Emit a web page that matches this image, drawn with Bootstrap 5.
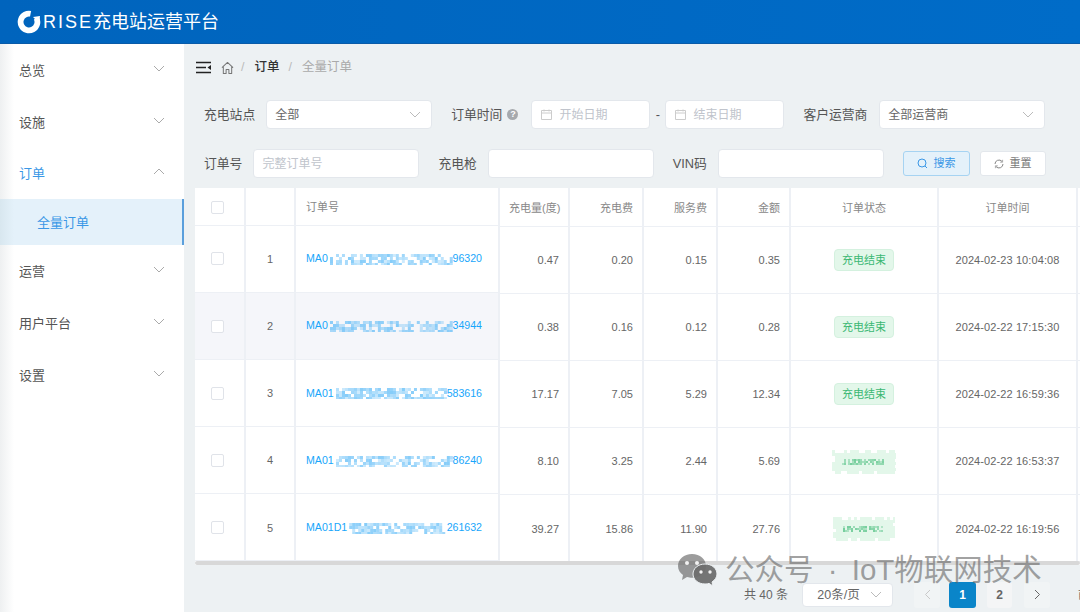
<!DOCTYPE html>
<html lang="zh">
<head>
<meta charset="utf-8">
<title>RISE充电站运营平台</title>
<link href="https://cdn.jsdelivr.net/npm/bootstrap@5.3.0/dist/css/bootstrap.min.css" rel="stylesheet">
<style>
html,body{height:100%;overflow:hidden}
body{width:1080px;height:612px;background:#edf1f3;font-family:"Liberation Sans","Noto Sans CJK SC",sans-serif;font-size:12px;color:#555}
.topbar{height:44px;background:linear-gradient(90deg,#0064bd,#006cc8);color:#fff;padding-left:17px;border-bottom:1px solid #0a5ba8}
.brand-txt{font-size:18px;margin-left:2px;line-height:44px}
.brand-txt i{font-style:normal;letter-spacing:2px}
.shell{height:568px}
.sidemenu{width:184px;flex:none;background:linear-gradient(90deg,#eef0f1 0,#fff 14px);font-size:13px;color:#555;padding-top:1px}
.mitem{height:52px;padding:0 19px;color:#555}
.mitem svg{margin-bottom:5px}
.mitem.open{height:50px;color:#3a97e6}
.msub{height:46px;margin-bottom:1px;padding:2px 0 0 37px;background:linear-gradient(90deg,#d8e7ef,#e4f1fa 14px);border-right:2px solid #5b9fdc;color:#3a97e6}
.mainpane{width:896px;flex:none;position:relative}
.crumbs{height:46px;padding:1px 0 0 12px;font-size:12.5px;color:#aaa}
.crumbs b{color:#333;font-weight:500}
.sep{color:#bbb;margin:0 10px 0 9px}
.frow{padding-left:20px;font-size:12.8px;color:#555;white-space:nowrap}
.frow.r1{height:40px;margin-top:10px}
.frow.r2{height:48px;padding-top:9px}
.field{height:29px;flex:none;border:1px solid #e3e7ec;border-radius:4px;background-color:#fff;font-size:12px;padding:0 8px;color:#666;box-shadow:none}
.field::placeholder{color:#c0c4cc}
select.field{appearance:none;background-image:url("data:image/svg+xml,%3Csvg xmlns='http://www.w3.org/2000/svg' width='12' height='7'%3E%3Cpath d='M1 1l5 5 5-5' fill='none' stroke='%23bbb'/%3E%3C/svg%3E");background-repeat:no-repeat;background-position:right 10px center}
.w166{width:166px}.w119{width:119px}
.dfield{display:flex;align-items:center;color:#c0c4cc;gap:7px;padding:0 9px}
.qmark{width:11px;height:11px;flex:none;border-radius:50%;background:#a6a9ad;color:#fff;font-size:9px;line-height:11px;text-align:center;display:inline-block;font-weight:700}
.fbtn{height:25px;flex:none;border:1px solid #e3e7ec;border-radius:3px;background:#fff;color:#777;font-size:11px;padding:0;display:inline-flex;align-items:center;justify-content:center;gap:5px;width:67px}
.fbtn.prim{background:#e4f1fa;border-color:#a6d3f2;color:#3a97e6}
.tablewrap{position:absolute;left:11px;top:144px;width:885px;height:377px;background:#fff;overflow:hidden}
.gridt{border-collapse:collapse;table-layout:fixed;flex:none;align-self:flex-start}
.gridt th,.gridt td{border:solid #edf0f5;border-width:0 2px 1px 0;padding:1px 9px 0;font-weight:400;color:#666;font-size:11px;vertical-align:middle;white-space:nowrap;overflow:hidden}
.gridt thead th{color:#888;height:37px;font-size:11px;padding-top:2px}
.gridt tbody td{height:67.2px}
.rightpart thead th{height:38px}
.gridt tr.hov td{background:#f5f6fa}
.numr{text-align:right}.ctr{text-align:center}
.timec{letter-spacing:.1px}
.boxchk{width:13px;height:13px;margin:-2px 0 0 -4px;border:1px solid #e0e3e9;border-radius:2px;background:#fff;display:inline-block;vertical-align:middle}
.orderlink{color:#18a6fb;display:flex;align-items:center;font-size:10.6px;margin-right:7px}
.orderlink svg{flex:1 1 0;min-width:0;filter:blur(.7px)}
.statuspill{display:inline-block;background:#e3f7ea;border:1px solid #d4f1df;color:#3bb873;border-radius:4px;padding:0 7px;height:22px;line-height:20px;font-size:11px}
.hscroll{position:absolute;left:0;bottom:0;height:4px;width:100%;background:#d8d8d8;border-radius:2px}
.pager{position:absolute;left:0;right:0;top:538px;height:25px;color:#666;font-size:12px;padding-left:560px;white-space:nowrap}
.pselect{width:91px;height:24px;margin-left:14px;margin-right:21px;text-align:center;padding:0 18px 0 0;font-size:12.5px;line-height:22px}
.pbtn{width:26px;height:26px;flex:none;border-radius:3px;background:#f4f5f6;color:#666;font-weight:700;display:flex;align-items:center;justify-content:center}
.pbtn.cur{background:#0a85c9;color:#fff;width:27px}
.pbtn.plain{background:#f1f4f5}
.pbtn.two{width:25px}
.wmark{position:absolute;left:493px;top:509px;display:flex;align-items:center;color:rgba(100,100,100,.6);font-size:29.5px;word-spacing:6px;line-height:34px;white-space:nowrap}
.wmark svg{margin-right:6px;flex:none}
.gapa{margin-left:9px}.gapb{margin-left:11px}.gapc{margin-left:12px}.gapd{margin-left:28px}
</style>
</head>
<body>
<header class="topbar d-flex align-items-center">
  <svg width="24" height="24" viewBox="0 0 24 24"><circle cx="12" cy="12" r="8.400" fill="none" stroke="#fff" stroke-width="5.800" stroke-dasharray="45 8" transform="rotate(-28 12 12)"/><path d="M16 7l7-1-1 7z" fill="#fff"/></svg>
  <span class="brand-txt"><i>RISE</i>充电站运营平台</span>
</header>
<div class="shell d-flex">
  <aside class="sidemenu">
    <div class="mitem d-flex align-items-center justify-content-between"><span>总览</span><svg width="12" height="7"><path d="M1 1l5 5 5-5" fill="none" stroke="#aaa"/></svg></div>
    <div class="mitem d-flex align-items-center justify-content-between"><span>设施</span><svg width="12" height="7"><path d="M1 1l5 5 5-5" fill="none" stroke="#aaa"/></svg></div>
    <div class="mitem open d-flex align-items-center justify-content-between"><span>订单</span><svg width="12" height="7"><path d="M1 6l5-5 5 5" fill="none" stroke="#aaa"/></svg></div>
    <div class="msub d-flex align-items-center">全量订单</div>
    <div class="mitem d-flex align-items-center justify-content-between"><span>运营</span><svg width="12" height="7"><path d="M1 1l5 5 5-5" fill="none" stroke="#aaa"/></svg></div>
    <div class="mitem d-flex align-items-center justify-content-between"><span>用户平台</span><svg width="12" height="7"><path d="M1 1l5 5 5-5" fill="none" stroke="#aaa"/></svg></div>
    <div class="mitem d-flex align-items-center justify-content-between"><span>设置</span><svg width="12" height="7"><path d="M1 1l5 5 5-5" fill="none" stroke="#aaa"/></svg></div>
  </aside>
  <main class="mainpane">
    <div class="crumbs d-flex align-items-center">
      <svg width="16" height="13" viewBox="0 0 16 13"><path d="M0 1.500h15M0 6.500h10M0 11.500h15" stroke="#222" stroke-width="1.600"/><path d="M15 4v5l-3.500-2.500z" fill="#222"/></svg>
      <svg class="gapa" width="13" height="14" viewBox="0 0 14 14"><path d="M1 6.500L7 1l6 5.500M2.500 5.500V13h3V8.500h3V13h3V5.500" fill="none" stroke="#777" stroke-width="1.100" stroke-linejoin="round"/></svg>
      <span class="sep" style="margin-left:7px">/</span><b>订单</b><span class="sep">/</span><span>全量订单</span>
    </div>
    <div class="frow r1 d-flex align-items-start">
      <span style="line-height:29px;margin-right:11px">充电站点</span>
      <select class="field w166" aria-label="充电站点"><option>全部</option></select>
      <span style="line-height:29px;margin-left:19px;margin-right:5px">订单时间</span>
      <span class="qmark" style="margin-top:9px;margin-right:13px">?</span>
      <div class="field w119 dfield"><svg width="11" height="11" viewBox="0 0 11 11"><path d="M.5 1.500h10v9H.5zM.5 4h10M3 .5v2M8 .5v2" fill="none" stroke="#ccc"/></svg>开始日期</div>
      <span style="line-height:29px;width:15px;text-align:center">-</span>
      <div class="field w119 dfield"><svg width="11" height="11" viewBox="0 0 11 11"><path d="M.5 1.500h10v9H.5zM.5 4h10M3 .5v2M8 .5v2" fill="none" stroke="#ccc"/></svg>结束日期</div>
      <span style="line-height:29px;margin-left:19px;margin-right:12px">客户运营商</span>
      <select class="field w166" aria-label="客户运营商"><option>全部运营商</option></select>
    </div>
    <div class="frow r2 d-flex align-items-start">
      <span style="line-height:29px;margin-right:11px">订单号</span>
      <input class="field w166" placeholder="完整订单号">
      <span style="line-height:29px;margin-left:19px;margin-right:11px">充电枪</span>
      <input class="field w166">
      <span style="line-height:29px;margin-left:19px;margin-right:11px">VIN码</span>
      <input class="field w166">
      <button class="fbtn prim" style="margin-left:19px;margin-top:2px"><svg width="11" height="11" viewBox="0 0 11 11"><circle cx="5" cy="5" r="4" fill="none" stroke="#3a97e6"/><path d="M8 8l2 2" stroke="#3a97e6"/></svg>搜索</button>
      <button class="fbtn" style="margin-left:10px;margin-top:2px;width:66px"><svg width="10" height="10" viewBox="0 0 10 10"><path d="M1 5a4 4 0 0 1 7-2.600M9 5a4 4 0 0 1-7 2.600" fill="none" stroke="#888"/><path d="M8.600 .8v2.400H6.200M1.400 9.200V6.800h2.400" fill="none" stroke="#888" stroke-width=".7"/></svg>重置</button>
    </div>
    <div class="tablewrap d-flex">
      <table class="gridt" style="width:304px">
        <colgroup><col style="width:50px"><col style="width:50px"><col style="width:204px"></colgroup>
        <thead><tr><th class="ctr"><span class="boxchk"></span></th><th></th><th style="padding-left:10px">订单号</th></tr></thead>
        <tbody>
          <tr><td class="ctr"><span class="boxchk"></span></td><td class="ctr">1</td><td style="padding-left:10px"><span class="orderlink">MA0<svg class="mosaic" data-seed="3" height="12"></svg>96320</span></td></tr>
          <tr class="hov"><td class="ctr"><span class="boxchk"></span></td><td class="ctr">2</td><td style="padding-left:10px"><span class="orderlink">MA0<svg class="mosaic" data-seed="7" height="12"></svg>34944</span></td></tr>
          <tr><td class="ctr"><span class="boxchk"></span></td><td class="ctr">3</td><td style="padding-left:10px"><span class="orderlink">MA01<svg class="mosaic" data-seed="11" height="12"></svg>583616</span></td></tr>
          <tr><td class="ctr"><span class="boxchk"></span></td><td class="ctr">4</td><td style="padding-left:10px"><span class="orderlink">MA01<svg class="mosaic" data-seed="17" height="12"></svg>86240</span></td></tr>
          <tr><td class="ctr"><span class="boxchk"></span></td><td class="ctr">5</td><td style="padding-left:10px"><span class="orderlink">MA01D1<svg class="mosaic" data-seed="23" height="12"></svg>261632</span></td></tr>
        </tbody>
      </table>
      <table class="gridt rightpart" style="width:581px">
        <colgroup><col style="width:69px"><col style="width:74px"><col style="width:74px"><col style="width:73px"><col style="width:148px"><col style="width:139px"><col style="width:40px"></colgroup>
        <thead><tr><th class="numr">充电量(度)</th><th class="numr">充电费</th><th class="numr">服务费</th><th class="numr">金额</th><th class="ctr">订单状态</th><th class="ctr">订单时间</th><th></th></tr></thead>
        <tbody>
          <tr><td class="numr">0.47</td><td class="numr">0.20</td><td class="numr">0.15</td><td class="numr">0.35</td><td class="ctr"><span class="statuspill">充电结束</span></td><td class="ctr timec">2024-02-23 10:04:08</td><td></td></tr>
          <tr><td class="numr">0.38</td><td class="numr">0.16</td><td class="numr">0.12</td><td class="numr">0.28</td><td class="ctr"><span class="statuspill">充电结束</span></td><td class="ctr timec">2024-02-22 17:15:30</td><td></td></tr>
          <tr><td class="numr">17.17</td><td class="numr">7.05</td><td class="numr">5.29</td><td class="numr">12.34</td><td class="ctr"><span class="statuspill">充电结束</span></td><td class="ctr timec">2024-02-22 16:59:36</td><td></td></tr>
          <tr><td class="numr">8.10</td><td class="numr">3.25</td><td class="numr">2.44</td><td class="numr">5.69</td><td class="ctr"><svg class="gmosaic" data-seed="29" width="64" height="24" style="vertical-align:middle"></svg></td><td class="ctr timec">2024-02-22 16:53:37</td><td></td></tr>
          <tr><td class="numr">39.27</td><td class="numr">15.86</td><td class="numr">11.90</td><td class="numr">27.76</td><td class="ctr"><svg class="gmosaic" data-seed="31" width="62" height="24" style="vertical-align:middle"></svg></td><td class="ctr timec">2024-02-22 16:19:56</td><td></td></tr>
        </tbody>
      </table>
      <div class="hscroll"></div>
    </div>
    <div class="pager d-flex align-items-center">
      <span>共 40 条</span>
      <select class="field pselect" aria-label="每页条数"><option>20条/页</option></select>
      <div class="pbtn plain"><svg width="7" height="11"><path d="M6 1L1.500 5.500 6 10" fill="none" stroke="#c8c8c8"/></svg></div>
      <div class="pbtn cur gapa">1</div>
      <div class="pbtn two gapb">2</div>
      <div class="pbtn plain gapc"><svg width="7" height="11"><path d="M1 1l4.500 4.500L1 10" fill="none" stroke="#666"/></svg></div>
      <span class="gapd">前往</span>
    </div>
    <div class="wmark">
      <svg width="42" height="34" viewBox="0 0 42 34"><path d="M15 1C7 1 1 6 1 13c0 4 2 7 5 9l-1 5 5-3c2 .5 3 .7 5 .7 8 0 14-5 14-11.700S23 1 15 1z" fill="rgba(90,90,90,.6)"/><path d="M28 11c-7 0-12 4.500-12 10s5 10 12 10c1.500 0 3-.2 4-.6l4 2.600-1-4c3-2 5-5 5-8 0-5.500-5-10-12-10z" fill="rgba(110,110,110,.95)" stroke="#edf1f3"/><circle cx="10" cy="10" r="2" fill="#f2f2f2"/><circle cx="20" cy="10" r="2" fill="#f2f2f2"/><circle cx="24" cy="19" r="1.700" fill="#f2f2f2"/><circle cx="33" cy="19" r="1.700" fill="#f2f2f2"/></svg>
      <span>公众号 · IoT物联网技术</span>
    </div>
  </main>
</div>
<script>
function rng(seed){return function(){seed=(seed*16807)%2147483647;return (seed&1023)/1023;};}
document.querySelectorAll('svg.mosaic').forEach(function(s){
  var r=rng(+s.dataset.seed),w=Math.round(s.getBoundingClientRect().width),out='';
  s.setAttribute('viewBox','0 0 '+w+' 12');
  for(var y=1;y<11;y+=3)for(var x=2;x<w-1;x+=3){
    var v=r();if(v<.3)continue;
    out+='<rect x="'+x+'" y="'+y+'" width="3" height="3" fill="#2fa8f5" opacity="'+(.08+v*.5).toFixed(2)+'"/>';
  }
  s.innerHTML=out;
});
document.querySelectorAll('svg.gmosaic').forEach(function(s){
  var r=rng(+s.dataset.seed),w=+s.getAttribute('width'),h=24,out='';
  for(var y=0;y<h;y+=3)for(var x=0;x<w;x+=3){
    var edge=x<3||y<3||x>=w-3||y>=h-3;
    if(edge&&r()<.35)continue;
    out+='<rect x="'+x+'" y="'+y+'" width="3" height="3" fill="#e3f7ea"/>';
  }
  for(y=9;y<15;y+=2)for(x=10;x<w-12;x+=2){
    var v=r();if(v<.35)continue;
    out+='<rect x="'+x+'" y="'+y+'" width="2" height="2" fill="#3bb873" opacity="'+(.1+v*.55).toFixed(2)+'"/>';
  }
  s.innerHTML=out;
});
</script>
</body>
</html>
